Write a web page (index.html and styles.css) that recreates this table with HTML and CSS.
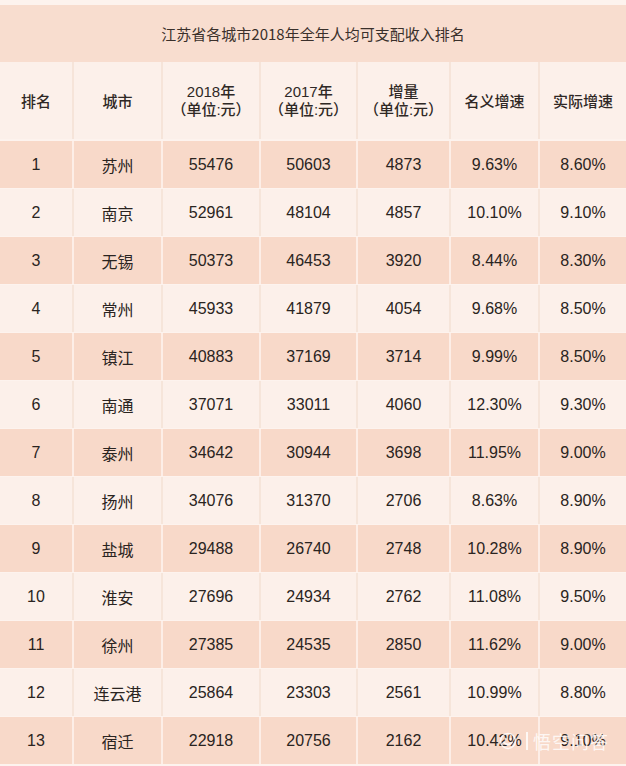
FILE: index.html
```html
<!DOCTYPE html>
<html lang="zh-CN">
<head>
<meta charset="utf-8">
<title>江苏省各城市2018年全年人均可支配收入排名</title>
<link rel="stylesheet" href="styles.css">
</head>
<body>
<div class="page">
  <div class="title">江苏省各城市2018年全年人均可支配收入排名</div>
  <div class="table">
    <div class="row head">
      <div class="cell">排名</div>
      <div class="cell">城市</div>
      <div class="cell two"><span>2018年</span><span>（单位:元）</span></div>
      <div class="cell two"><span>2017年</span><span>（单位:元）</span></div>
      <div class="cell two"><span>增量</span><span>（单位:元）</span></div>
      <div class="cell">名义增速</div>
      <div class="cell">实际增速</div>
    </div>
    <div class="row odd"><div class="cell">1</div><div class="cell">苏州</div><div class="cell">55476</div><div class="cell">50603</div><div class="cell">4873</div><div class="cell">9.63%</div><div class="cell">8.60%</div></div>
    <div class="row even"><div class="cell">2</div><div class="cell">南京</div><div class="cell">52961</div><div class="cell">48104</div><div class="cell">4857</div><div class="cell">10.10%</div><div class="cell">9.10%</div></div>
    <div class="row odd"><div class="cell">3</div><div class="cell">无锡</div><div class="cell">50373</div><div class="cell">46453</div><div class="cell">3920</div><div class="cell">8.44%</div><div class="cell">8.30%</div></div>
    <div class="row even"><div class="cell">4</div><div class="cell">常州</div><div class="cell">45933</div><div class="cell">41879</div><div class="cell">4054</div><div class="cell">9.68%</div><div class="cell">8.50%</div></div>
    <div class="row odd"><div class="cell">5</div><div class="cell">镇江</div><div class="cell">40883</div><div class="cell">37169</div><div class="cell">3714</div><div class="cell">9.99%</div><div class="cell">8.50%</div></div>
    <div class="row even"><div class="cell">6</div><div class="cell">南通</div><div class="cell">37071</div><div class="cell">33011</div><div class="cell">4060</div><div class="cell">12.30%</div><div class="cell">9.30%</div></div>
    <div class="row odd"><div class="cell">7</div><div class="cell">泰州</div><div class="cell">34642</div><div class="cell">30944</div><div class="cell">3698</div><div class="cell">11.95%</div><div class="cell">9.00%</div></div>
    <div class="row even"><div class="cell">8</div><div class="cell">扬州</div><div class="cell">34076</div><div class="cell">31370</div><div class="cell">2706</div><div class="cell">8.63%</div><div class="cell">8.90%</div></div>
    <div class="row odd"><div class="cell">9</div><div class="cell">盐城</div><div class="cell">29488</div><div class="cell">26740</div><div class="cell">2748</div><div class="cell">10.28%</div><div class="cell">8.90%</div></div>
    <div class="row even"><div class="cell">10</div><div class="cell">淮安</div><div class="cell">27696</div><div class="cell">24934</div><div class="cell">2762</div><div class="cell">11.08%</div><div class="cell">9.50%</div></div>
    <div class="row odd"><div class="cell">11</div><div class="cell">徐州</div><div class="cell">27385</div><div class="cell">24535</div><div class="cell">2850</div><div class="cell">11.62%</div><div class="cell">9.00%</div></div>
    <div class="row even"><div class="cell">12</div><div class="cell">连云港</div><div class="cell">25864</div><div class="cell">23303</div><div class="cell">2561</div><div class="cell">10.99%</div><div class="cell">8.80%</div></div>
    <div class="row odd"><div class="cell">13</div><div class="cell">宿迁</div><div class="cell">22918</div><div class="cell">20756</div><div class="cell">2162</div><div class="cell">10.42%</div><div class="cell">9.10%</div></div>
  </div>
  <div class="watermark">
    <svg class="wm-icon" width="18" height="18" viewBox="0 0 18 18" aria-hidden="true">
      <circle cx="9" cy="9" r="7.5" fill="none" stroke="currentColor" stroke-width="1.6"/>
      <path d="M5 10.5 C6.5 13 11.5 13 13 10.5" fill="none" stroke="currentColor" stroke-width="1.6" stroke-linecap="round"/>
      <circle cx="6.5" cy="7" r="1.2" fill="currentColor"/>
      <circle cx="11.5" cy="7" r="1.2" fill="currentColor"/>
    </svg>
    <span class="wm-bar"></span>
    <span class="wm-text">悟空问答</span>
  </div>
</div>
</body>
</html>
```
FILE: styles.css
```css
html, body {
  margin: 0;
  padding: 0;
}
body {
  background: #fdf3ee;
  font-family: "Liberation Sans", "Noto Sans CJK SC", sans-serif;
  color: #2a2421;
  width: 626px;
  height: 766px;
  overflow: hidden;
}
.page {
  position: relative;
  padding-top: 5px;
}
.title {
  height: 57px;
  background: #f8ddcf;
  display: flex;
  align-items: center;
  justify-content: center;
  font-size: 15px;
  color: #3a302b;
  font-family: "Noto Sans CJK SC", sans-serif;
}
.table {
  display: flex;
  flex-direction: column;
}
.row {
  display: grid;
  grid-template-columns: 74px 89px 98px 97px 93px 89px 86px;
  height: 48px;
  border-bottom: 1px solid #fdf3ee;
  box-sizing: border-box;
}
.row.head {
  height: 79px;
  border-bottom: 2px solid #fdf3ee;
}
.cell {
  display: flex;
  align-items: center;
  justify-content: center;
  font-size: 16px;
  border-right: 2px solid rgba(255, 247, 243, 0.7);
  box-sizing: border-box;
}
.cell:last-child {
  border-right: none;
}
.head .cell {
  background: #fcf0ea;
  font-size: 15px;
  font-weight: 500;
  color: #2f2825;
  border-right-color: rgba(240, 215, 200, 0.5);
}
.cell.two {
  flex-direction: column;
  line-height: 18px;
}
.odd .cell {
  background: #f8d9c9;
}
.even .cell {
  background: #fcf0ea;
  border-right-color: rgba(240, 215, 200, 0.45);
}
.watermark {
  position: absolute;
  left: 499px;
  top: 731px;
  display: flex;
  align-items: center;
  gap: 5px;
  color: rgba(255, 255, 255, 0.8);
}
.wm-icon {
  display: block;
}
.wm-bar {
  width: 2px;
  height: 18px;
  background: rgba(255, 255, 255, 0.8);
  margin-left: 4px;
}
.wm-text {
  font-family: "Noto Sans CJK SC", sans-serif;
  font-size: 18px;
  line-height: 20px;
  letter-spacing: 1px;
}
```
